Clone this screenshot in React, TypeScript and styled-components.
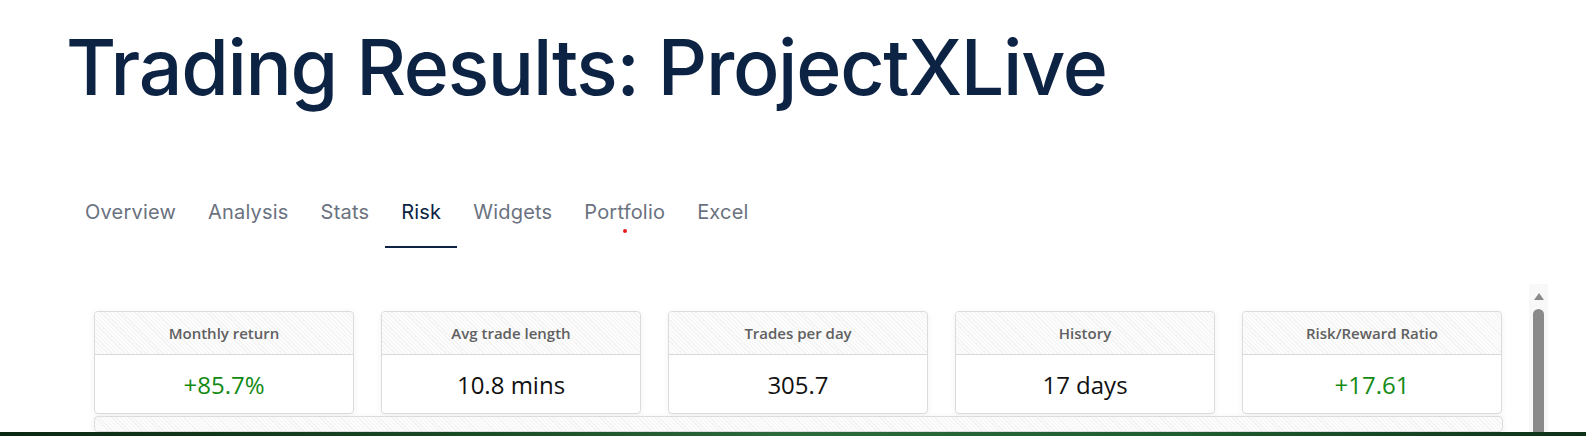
import React from "react";
import styled, { createGlobalStyle } from "styled-components";

const Global = createGlobalStyle`
  html, body { margin: 0; padding: 0; background: #fff; }
  body { width: 1586px; height: 436px; overflow: hidden; }
  * { box-sizing: border-box; }
`;

const Page = styled.div`
  width: 1586px;
  height: 436px;
  display: flex;
  flex-direction: column;
  overflow: hidden;
`;

const Title = styled.h1`
  margin: 0;
  padding: 17px 0 0 66px;
  font-family: Inter, "Liberation Sans", sans-serif;
  font-weight: 500;
  font-size: 77px;
  line-height: 100px;
  letter-spacing: -1.3px;
  color: #0c2344;
`;

const Tabs = styled.nav`
  display: flex;
  margin: 75px 0 0 69px;
  height: 56px;
`;

const Tab = styled.div<{ $active?: boolean }>`
  position: relative;
  height: 56px;
  padding: 8px 16px 0;
  font-family: Inter, "Liberation Sans", sans-serif;
  font-size: 20px;
  line-height: 24px;
  letter-spacing: 0.2px;
  color: ${(p) => (p.$active ? "#0c2344" : "#6b7280")};
  border-bottom: 2px solid ${(p) => (p.$active ? "#0c2344" : "transparent")};
`;

const Dot = styled.span`
  position: absolute;
  left: 50%;
  top: 37px;
  width: 4px;
  height: 4px;
  margin-left: -2px;
  border-radius: 50%;
  background: #e11d1d;
`;

const Panel = styled.div`
  display: flex;
  margin-top: 36px;
  flex: 1;
  min-height: 0;
`;

const Content = styled.div`
  flex: 0 0 1529px;
  padding: 27px 0 0 94px;
  display: flex;
  flex-direction: column;
  gap: 2px;
`;

const CardRow = styled.div`
  display: flex;
  gap: 27px;
`;

const hatch = `repeating-linear-gradient(45deg, #f3f3f3 0 1px, #fcfcfc 1px 3px)`;

const Card = styled.div`
  width: 260px;
  height: 103px;
  border: 1px solid #dcdcdc;
  border-radius: 4px;
  background: #fff;
  box-shadow: 0 1px 6px rgba(0, 0, 0, 0.06);
  display: flex;
  flex-direction: column;
  overflow: hidden;
`;

const CardHead = styled.div`
  height: 43px;
  flex: 0 0 43px;
  background: ${hatch};
  border-bottom: 1px solid #d9d9d9;
  display: flex;
  align-items: center;
  justify-content: center;
  font-family: "Open Sans", "Noto Sans", sans-serif;
  font-weight: 600;
  font-size: 15px;
  color: #606060;
`;

const CardValue = styled.div<{ $positive?: boolean }>`
  flex: 1;
  display: flex;
  align-items: center;
  justify-content: center;
  font-family: "Open Sans", "Noto Sans", sans-serif;
  font-size: 24px;
  color: ${(p) => (p.$positive ? "#138a13" : "#111")};
`;

const WideCard = styled.div`
  width: 1409px;
  height: 30px;
  border: 1px solid #dcdcdc;
  border-radius: 4px;
  background: ${hatch};
  box-shadow: 0 1px 6px rgba(0, 0, 0, 0.06);
`;

const ScrollTrack = styled.div`
  width: 19px;
  background: #f8f8f8;
  display: flex;
  flex-direction: column;
  align-items: center;
  padding-top: 9px;
  gap: 9px;
`;

const Arrow = styled.div`
  width: 0;
  height: 0;
  border-left: 5px solid transparent;
  border-right: 5px solid transparent;
  border-bottom: 7px solid #8a8a8a;
`;

const Thumb = styled.div`
  width: 11px;
  flex: 1;
  background: #8a8a8a;
  border-radius: 6px 6px 0 0;
`;

const Footer = styled.div`
  height: 4px;
  flex: 0 0 4px;
  background: linear-gradient(90deg, #0a2812 0%, #1a4a26 30%, #2c6a3c 50%, #1f5c30 75%, #0d3018 100%);
`;

const tabs = ["Overview", "Analysis", "Stats", "Risk", "Widgets", "Portfolio", "Excel"];

const stats = [
  { label: "Monthly return", value: "+85.7%", positive: true },
  { label: "Avg trade length", value: "10.8 mins" },
  { label: "Trades per day", value: "305.7" },
  { label: "History", value: "17 days" },
  { label: "Risk/Reward Ratio", value: "+17.61", positive: true },
];

export default function App() {
  return (
    <Page>
      <Global />
      <Title>Trading Results: ProjectXLive</Title>
      <Tabs>
        {tabs.map((t) => (
          <Tab key={t} $active={t === "Risk"}>
            {t}
            {t === "Portfolio" && <Dot />}
          </Tab>
        ))}
      </Tabs>
      <Panel>
        <Content>
          <CardRow>
            {stats.map((s) => (
              <Card key={s.label}>
                <CardHead>{s.label}</CardHead>
                <CardValue $positive={s.positive}>{s.value}</CardValue>
              </Card>
            ))}
          </CardRow>
          <WideCard />
        </Content>
        <ScrollTrack>
          <Arrow />
          <Thumb />
        </ScrollTrack>
      </Panel>
      <Footer />
    </Page>
  );
}
